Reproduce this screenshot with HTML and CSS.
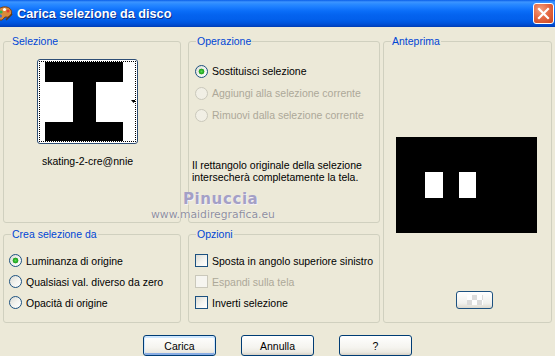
FILE: index.html
```html
<!DOCTYPE html>
<html lang="it">
<head>
<meta charset="utf-8">
<title>Carica selezione da disco</title>
<link rel="stylesheet" href="styles.css">
</head>
<body>
<div class="window">
  <div class="titlebar">
    <svg class="app-icon" width="16" height="18" viewBox="0 0 16 18">
      <path d="M2 4 C5 1 12 1 14 5 C16 9 13 13 9 12 C7 11.5 7 14 5 15 C2 16 0 12 0 9 C0 7 1 5 2 4 Z" fill="#D98A3A" stroke="#7A3F12" stroke-width="1"/>
      <circle cx="4" cy="7" r="1.6" fill="#2DB34A"/>
      <circle cx="7.5" cy="4.5" r="1.6" fill="#FFFFFF"/>
      <circle cx="11" cy="6" r="1.5" fill="#E23B2E"/>
      <circle cx="3.5" cy="11" r="1.5" fill="#3A6FD8"/>
      <path d="M9 15 L15 9" stroke="#5A3A1A" stroke-width="1.6"/>
    </svg>
    <span class="title">Carica selezione da disco</span>
    <div class="close">
      <svg width="21" height="21" viewBox="0 0 21 21">
        <path d="M6 6 L15 15 M15 6 L6 15" stroke="#FFFFFF" stroke-width="2.2" stroke-linecap="square"/>
      </svg>
    </div>
  </div>

  <div class="client">
    <div class="groups">
      <fieldset class="group g-sel">
        <legend>Selezione</legend>
        <div class="thumb-col">
          <div class="thumb">
            <div class="thumb-focus">
              <svg width="95" height="79" viewBox="0 0 95 79">
                <rect width="95" height="79" fill="#FFFFFF"/>
                <rect x="5" y="0" width="78" height="20" fill="#000"/>
                <rect x="33" y="20" width="23" height="40" fill="#000"/>
                <rect x="5" y="60" width="78" height="19" fill="#000"/>
                <path d="M91 38 L96 38 L93.5 41 Z" fill="#000"/>
              </svg>
            </div>
          </div>
          <div class="thumb-name">skating-2-cre@nnie</div>
        </div>
      </fieldset>

      <fieldset class="group g-op">
        <legend>Operazione</legend>
        <div class="opts op-opts">
          <div class="opt"><span class="radio on"></span>Sostituisci selezione</div>
          <div class="opt disabled"><span class="radio"></span>Aggiungi alla selezione corrente</div>
          <div class="opt disabled"><span class="radio"></span>Rimuovi dalla selezione corrente</div>
        </div>
        <p class="note">Il rettangolo originale della selezione<br>intersecherà completamente la tela.</p>
      </fieldset>

      <fieldset class="group g-prev">
        <legend>Anteprima</legend>
        <svg class="preview" width="141" height="96" viewBox="0 0 141 96">
          <rect width="141" height="96" fill="#000"/>
          <rect x="29" y="35" width="18" height="26" fill="#FFF"/>
          <rect x="63" y="35" width="17" height="26" fill="#FFF"/>
        </svg>
        <div class="mini-btn"><span class="checker"></span></div>
      </fieldset>

      <fieldset class="group g-crea">
        <legend>Crea selezione da</legend>
        <div class="opts low-opts crea-opts">
          <div class="opt"><span class="radio on"></span>Luminanza di origine</div>
          <div class="opt"><span class="radio"></span>Qualsiasi val. diverso da zero</div>
          <div class="opt"><span class="radio"></span>Opacità di origine</div>
        </div>
      </fieldset>

      <fieldset class="group g-opz">
        <legend>Opzioni</legend>
        <div class="opts low-opts opz-opts">
          <div class="opt"><span class="check"></span>Sposta in angolo superiore sinistro</div>
          <div class="opt disabled"><span class="check"></span>Espandi sulla tela</div>
          <div class="opt"><span class="check"></span>Inverti selezione</div>
        </div>
      </fieldset>
    </div>

    <div class="buttons">
      <div class="btn default">Carica</div>
      <div class="btn">Annulla</div>
      <div class="btn">?</div>
    </div>

    <div class="watermark">
      <div class="wm-name">Pinuccia</div>
      <div class="wm-url">www.maidiregrafica.eu</div>
    </div>
  </div>
</div>
</body>
</html>
```

FILE: styles.css
```css
* { box-sizing: border-box; }

html, body {
  margin: 0;
  padding: 0;
  background: #ECE9D8;
}

body {
  font-family: "Liberation Sans", Arial, sans-serif;
  font-size: 10.5px;
  color: #000;
  overflow: hidden;
}

.window {
  position: relative;
  width: 555px;
  height: 356px;
  background: #ECE9D8;
  overflow: hidden;
}

/* ---------- title bar ---------- */
.titlebar {
  height: 27px;
  display: flex;
  align-items: center;
  background: linear-gradient(to bottom,
    #0A5EE8 0px, #3D95FF 2px, #2B8BFF 4px, #1C7EFF 7px,
    #0A6DF8 11px, #0463EF 15px, #0260EC 19px, #0058E2 22px,
    #0050D6 24px, #0044C4 26px, #003BB0 27px);
}

.app-icon {
  margin-left: -3px;
  margin-top: 1px;
  flex: none;
}

.title {
  margin-left: 4px;
  color: #FFFFFF;
  font-family: "Liberation Sans", Arial, sans-serif;
  font-weight: bold;
  font-size: 12.7px;
  text-shadow: 1px 1px 0 #0A2E8C;
  flex: 1;
}

.close {
  width: 21px;
  height: 21px;
  margin-right: 1px;
  border: 1px solid #FFFFFF;
  border-radius: 3px;
  background: radial-gradient(circle at 35% 30%, #F4A080 0%, #E56A44 45%, #C84420 100%);
  display: flex;
  align-items: center;
  justify-content: center;
}

.close svg { display: block; margin: -1px; }

/* ---------- client area ---------- */
.groups {
  display: grid;
  grid-template-columns: 178px 199px 172px;
  grid-template-rows: 188px 95px;
  row-gap: 5px;
  padding: 8px 0 0 3px;
}

.group {
  margin: 0;
  padding: 0;
  min-width: 0;
  border: 1px solid #D0D0BF;
  border-radius: 3px;
}

.group legend {
  margin-left: 7px;
  padding: 0 1px;
  color: #0046D5;
  line-height: 13px;
  font-size: 10.5px;
}

.g-sel  { grid-column: 1; grid-row: 1; }
.g-op   { grid-column: 2; grid-row: 1; margin-left: 7px; }
.g-prev { grid-column: 3; grid-row: 1 / span 2; margin-left: 3px; }
.g-crea { grid-column: 1; grid-row: 2; }
.g-opz  { grid-column: 2; grid-row: 2; margin-left: 7px; }

/* Selezione */
.thumb-col {
  width: 101px;
  margin: 11px 0 0 33px;
  display: flex;
  flex-direction: column;
  align-items: center;
}

.thumb {
  width: 101px;
  height: 85px;
  border: 1px solid #2E4E74;
  border-radius: 3px;
  padding: 1px;
  background: #FFFFFF;
}

.thumb-focus {
  border: 1px dotted #000;
  width: 97px;
  height: 81px;
  overflow: hidden;
}

.thumb-focus svg { display: block; }

.thumb-name {
  margin-top: 11px;
  line-height: 13px;
  white-space: nowrap;
}

/* options */
.opts { display: flex; flex-direction: column; }

.op-opts { padding: 12px 0 0 6px; }
.op-opts .opt { height: 22px; }

.low-opts { padding-top: 9px; }
.low-opts .opt { height: 21px; }
.crea-opts { padding-left: 5px; }
.opz-opts { padding-left: 6px; }

.opt {
  display: flex;
  align-items: center;
  gap: 4px;
  white-space: nowrap;
}

.opt.disabled { color: #ACA899; }

.radio {
  flex: none;
  width: 13px;
  height: 13px;
  border-radius: 50%;
  border: 1px solid #1C5180;
  background: linear-gradient(135deg, #DCDCD5 0%, #F4F4F0 55%, #FFFFFF 100%);
}

.radio.on {
  background:
    radial-gradient(circle at 50% 50%, #5BDA57 0, #2FB32B 1.6px, #21A121 2.6px, rgba(33,161,33,0) 3.2px),
    linear-gradient(135deg, #DCDCD5 0%, #F4F4F0 55%, #FFFFFF 100%);
}

.disabled .radio {
  border-color: #CAC8BB;
  background: #F1EFE5;
}

.check {
  flex: none;
  width: 13px;
  height: 13px;
  border: 1px solid #1C5180;
  background: linear-gradient(135deg, #DCDCD5 0%, #F4F4F0 55%, #FFFFFF 100%);
}

.disabled .check {
  border-color: #CAC8BB;
  background: #F6F5F0;
}

.note {
  margin: 33px 0 0 3px;
  line-height: 12px;
  white-space: nowrap;
}

/* Anteprima */
.preview {
  display: block;
  margin: 89px 0 0 12px;
}

.mini-btn {
  width: 37px;
  height: 18px;
  margin: 58px 0 0 72px;
  border: 1px solid #1C5180;
  border-radius: 3px;
  background: linear-gradient(to bottom, #FFFFFF, #F1F1ED 70%, #DCD8CE);
  display: flex;
  align-items: center;
  justify-content: center;
}

.checker {
  width: 16px;
  height: 10px;
  background:
    conic-gradient(#D8D8D8 25%, #FFFFFF 0 50%, #D8D8D8 0 75%, #FFFFFF 0) 0 0 / 10px 10px;
  opacity: 0.9;
}

/* buttons */
.buttons {
  display: flex;
  justify-content: center;
  gap: 25px;
  margin-top: 12px;
}

.btn {
  width: 73px;
  height: 21px;
  border: 1px solid #003C74;
  border-radius: 3px;
  background: linear-gradient(to bottom, #FFFFFF 0%, #F5F4EF 60%, #ECEAE2 85%, #D6D0C5 100%);
  display: flex;
  align-items: center;
  justify-content: center;
  font-size: 10.5px;
}

.btn.default {
  box-shadow: inset 0 1px 0 1px #CEE7FF, inset 0 -1px 0 1px #89ADE4;
}

/* watermark overlay */
.watermark {
  position: absolute;
  left: 151px;
  top: 190px;
  pointer-events: none;
}

.wm-name {
  margin-left: 32px;
  font-family: "DejaVu Sans", sans-serif;
  font-weight: bold;
  font-size: 15px;
  letter-spacing: 0.6px;
  line-height: 18px;
  color: #A4A0C6;
  text-shadow: 1px 1px 0 #F4F2F8;
}

.wm-url {
  font-family: "DejaVu Sans", sans-serif;
  font-size: 10.8px;
  line-height: 13px;
  color: #8E8E9C;
  text-shadow: 0 0 1px #FFFFFF;
}
```
